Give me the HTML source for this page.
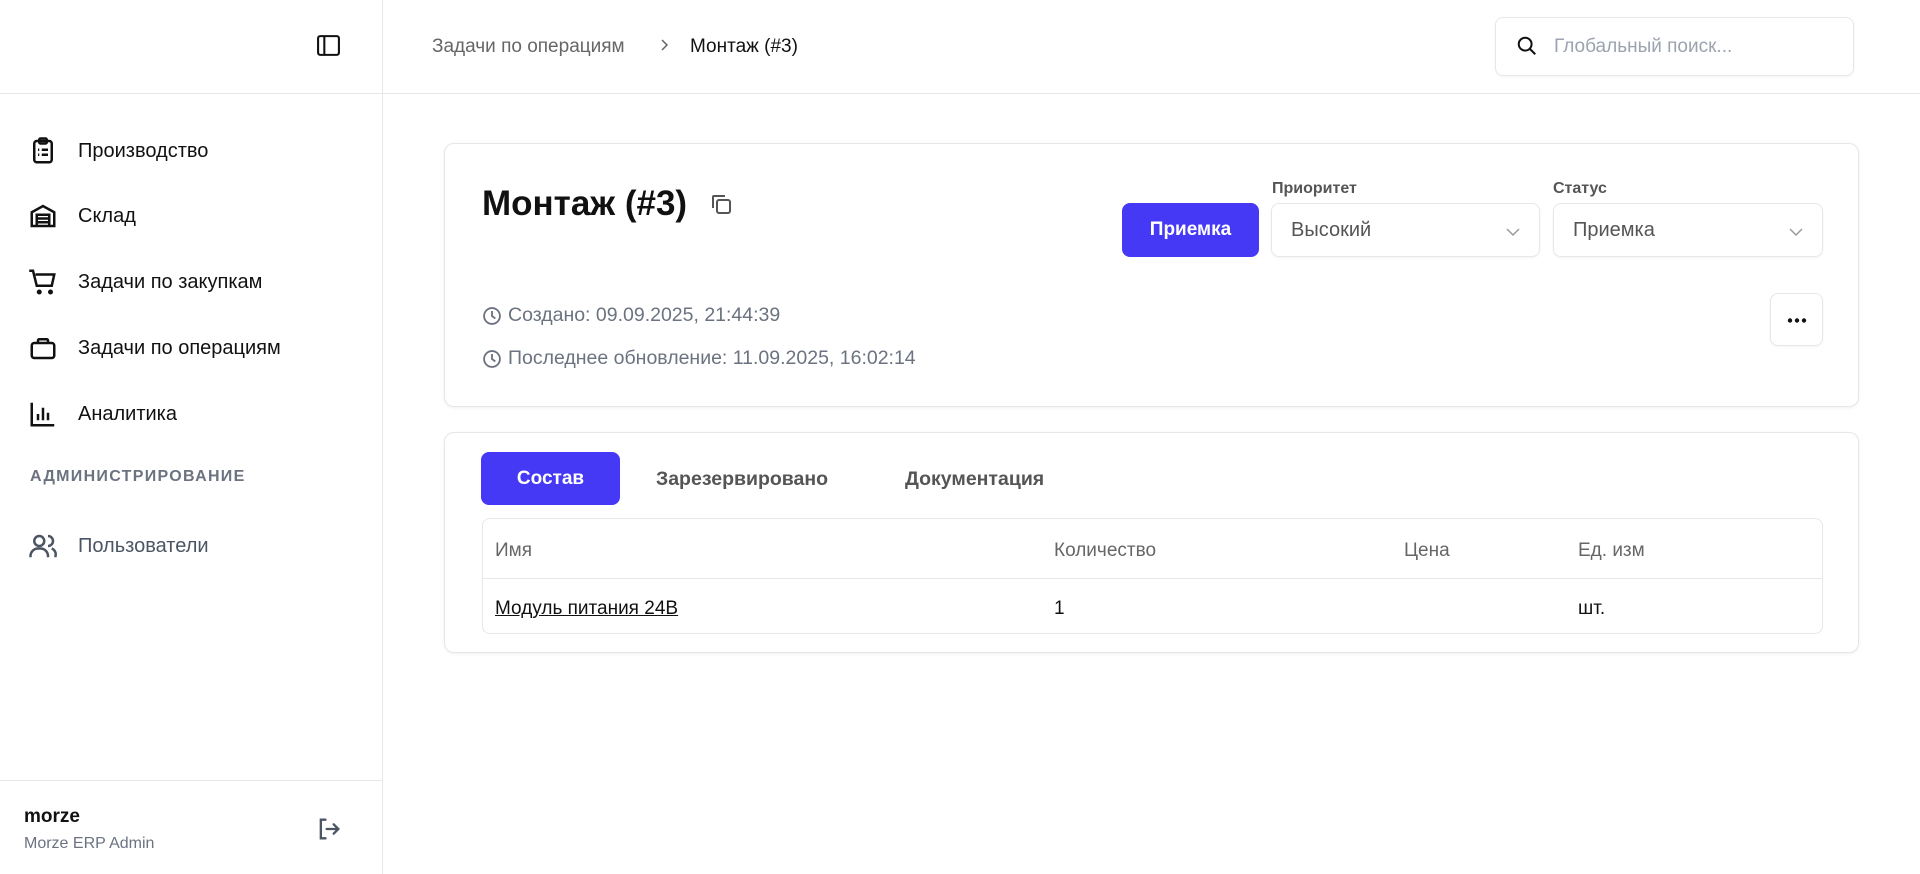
<!DOCTYPE html>
<html><head><meta charset="utf-8"><style>
*{box-sizing:border-box;margin:0;padding:0}
body{width:1920px;height:874px;background:#fff;font-family:"Liberation Sans","Noto Sans CJK SC",sans-serif;color:#111;position:relative;overflow:hidden}
.abs{position:absolute}
.side{left:0;top:0;width:383px;height:874px;border-right:1px solid #e5e7eb}
.hline{height:1px;background:#e5e7eb}
.nav{left:28px;font-size:20px;color:#111;display:flex;align-items:center;height:30px}
.nav svg{width:30px;height:30px;margin-right:20px}
.card{border:1px solid #e5e7eb;border-radius:10px;box-shadow:0 1px 3px rgba(0,0,0,.06);background:#fff}
.sel{border:1px solid #e5e7eb;border-radius:8px;box-shadow:0 1px 2px rgba(0,0,0,.05);font-size:20px;color:#555;padding-left:19px;display:flex;align-items:center}
.sel svg{position:absolute;right:18px;top:20px}
.lbl{font-size:16px;font-weight:bold;color:#555}
.th{font-size:19px;color:#666;top:540px}
.td{font-size:19px;color:#111;top:598px}
.meta{font-size:19.5px;color:#6b7280;display:flex;align-items:center;left:482px}
.meta svg{margin-right:6px}
</style></head><body>
<div class="abs side"></div>
<div class="abs hline" style="left:0;top:93px;width:1920px"></div>
<div class="abs hline" style="left:0;top:780px;width:383px"></div>
<svg class="abs" style="left:316px;top:33px" width="25" height="25" viewBox="0 0 24 24" fill="none" stroke="#111" stroke-width="2"><rect x="2" y="3" width="20" height="18" rx="2"/><line x1="8" y1="3" x2="8" y2="21"/></svg>

<div class="abs nav" style="top:136px"><svg viewBox="0 0 24 24" fill="none" stroke="#111" stroke-width="2"><rect x="5" y="4" width="14" height="17" rx="2"/><rect x="9" y="2" width="6" height="4" rx="1"/><path d="M8 11h1M11 11h5M8 15h1M11 15h5"/></svg>Производство</div>
<div class="abs nav" style="top:201px"><svg viewBox="0 0 24 24" fill="none" stroke="#111" stroke-width="2"><path d="M3 20V9l9-5 9 5v11z"/><path d="M7 20v-9h10v9M7 14h10M7 17h10"/></svg>Склад</div>
<div class="abs nav" style="top:267px"><svg viewBox="0 0 24 24" fill="none" stroke="#111" stroke-width="2"><path d="M1 3h3l3 12h12l2-9H6"/><circle cx="9" cy="20" r="1" fill="#111"/><circle cx="18" cy="20" r="1" fill="#111"/></svg>Задачи по закупкам</div>
<div class="abs nav" style="top:333px"><svg viewBox="0 0 24 24" fill="none" stroke="#111" stroke-width="2"><rect x="3" y="8" width="18" height="12" rx="2"/><path d="M8 8V6a1 1 0 0 1 1-1h6a1 1 0 0 1 1 1v2"/></svg>Задачи по операциям</div>
<div class="abs nav" style="top:399px"><svg viewBox="0 0 24 24" fill="none" stroke="#111" stroke-width="2"><path d="M3 3v18h18M8 17v-5M12 17V7M16 17v-6"/></svg>Аналитика</div>
<div class="abs" style="left:30px;top:468px;font-size:16px;font-weight:bold;color:#6b7280;letter-spacing:1.3px">АДМИНИСТРИРОВАНИЕ</div>
<div class="abs nav" style="top:531px;color:#4b5563"><svg viewBox="0 0 24 24" fill="none" stroke="#4b5563" stroke-width="2"><circle cx="9" cy="8" r="4"/><path d="M2 21v-1a6 6 0 0 1 6-6h2a6 6 0 0 1 6 6v1M16 4a4 4 0 0 1 0 8M19 14a5 5 0 0 1 3 6v1"/></svg>Пользователи</div>

<div class="abs" style="left:24px;top:806px;font-size:19px;font-weight:bold">morze</div>
<div class="abs" style="left:24px;top:835px;font-size:16px;color:#6b7280">Morze ERP Admin</div>
<svg class="abs" style="left:315px;top:815px" width="28" height="28" viewBox="0 0 24 24" fill="none" stroke="#4b5563" stroke-width="2" stroke-linecap="round"><path d="M9 4H5v16h4M10 12h10M16 8l4 4-4 4"/></svg>

<div class="abs" style="left:432px;top:36px;font-size:19px;color:#666">Задачи по операциям</div>
<svg class="abs" style="left:657px;top:38px" width="14" height="14" viewBox="0 0 14 14" fill="none" stroke="#666" stroke-width="1.5"><path d="M5 2l5 5-5 5"/></svg>
<div class="abs" style="left:690px;top:36px;font-size:19px;color:#111">Монтаж (#3)</div>
<div class="abs" style="left:1495px;top:17px;width:359px;height:59px;border:1px solid #e5e7eb;border-radius:8px;box-shadow:0 1px 2px rgba(0,0,0,.05)"></div>
<svg class="abs" style="left:1516px;top:35px" width="22" height="22" viewBox="0 0 24 24" fill="none" stroke="#111" stroke-width="2.2"><circle cx="10" cy="10" r="7"/><path d="M15 15l6 6"/></svg>
<div class="abs" style="left:1554px;top:36px;font-size:19px;color:#9ca3af">Глобальный поиск...</div>

<div class="abs card" style="left:444px;top:143px;width:1415px;height:264px"></div>
<div class="abs" style="left:482px;top:184px;font-size:35px;font-weight:bold">Монтаж (#3)</div>
<svg class="abs" style="left:709px;top:192px" width="24" height="24" viewBox="0 0 24 24" fill="none" stroke="#555" stroke-width="2"><rect x="8" y="8" width="13" height="13" rx="2"/><path d="M4 16V5a1 1 0 0 1 1-1h11"/></svg>
<div class="abs meta" style="top:304px"><svg width="20" height="20" viewBox="0 0 24 24" fill="none" stroke="#6b7280" stroke-width="2.2"><circle cx="12" cy="12" r="9.5"/><path d="M12 6v6l4 3"/></svg>Создано: 09.09.2025, 21:44:39</div>
<div class="abs meta" style="top:347px"><svg width="20" height="20" viewBox="0 0 24 24" fill="none" stroke="#6b7280" stroke-width="2.2"><circle cx="12" cy="12" r="9.5"/><path d="M12 6v6l4 3"/></svg>Последнее обновление: 11.09.2025, 16:02:14</div>

<div class="abs" style="left:1122px;top:203px;width:137px;height:54px;background:#4539f5;border-radius:8px;color:#fff;font-size:19px;font-weight:bold;display:flex;align-items:center;justify-content:center">Приемка</div>
<div class="abs lbl" style="left:1272px;top:180px">Приоритет</div>
<div class="abs sel" style="left:1271px;top:203px;width:269px;height:54px">Высокий<svg width="16" height="16" viewBox="0 0 16 16" fill="none" stroke="#999" stroke-width="1.5"><path d="M2 5l6 6 6-6"/></svg></div>
<div class="abs lbl" style="left:1553px;top:180px">Статус</div>
<div class="abs sel" style="left:1553px;top:203px;width:270px;height:54px">Приемка<svg width="16" height="16" viewBox="0 0 16 16" fill="none" stroke="#999" stroke-width="1.5"><path d="M2 5l6 6 6-6"/></svg></div>
<div class="abs" style="left:1770px;top:293px;width:53px;height:53px;border:1px solid #e5e7eb;border-radius:8px;box-shadow:0 1px 2px rgba(0,0,0,.05)"><svg style="position:absolute;left:16px;top:24px" width="20" height="5" viewBox="0 0 20 5"><circle cx="3" cy="2.5" r="2.2" fill="#111"/><circle cx="10" cy="2.5" r="2.2" fill="#111"/><circle cx="17" cy="2.5" r="2.2" fill="#111"/></svg></div>

<div class="abs card" style="left:444px;top:432px;width:1415px;height:221px"></div>
<div class="abs" style="left:481px;top:452px;width:139px;height:53px;background:#4539f5;border-radius:8px;color:#fff;font-size:19px;font-weight:bold;display:flex;align-items:center;justify-content:center">Состав</div>
<div class="abs" style="left:656px;top:468px;font-size:19.5px;font-weight:bold;color:#555">Зарезервировано</div>
<div class="abs" style="left:905px;top:468px;font-size:19.5px;font-weight:bold;color:#555">Документация</div>
<div class="abs" style="left:482px;top:518px;width:1341px;height:116px;border:1px solid #e5e7eb;border-radius:8px"></div>
<div class="abs hline" style="left:483px;top:578px;width:1339px"></div>
<div class="abs th" style="left:495px">Имя</div>
<div class="abs th" style="left:1054px">Количество</div>
<div class="abs th" style="left:1404px">Цена</div>
<div class="abs th" style="left:1578px">Ед. изм</div>
<div class="abs td" style="left:495px;text-decoration:underline">Модуль питания 24В</div>
<div class="abs td" style="left:1054px">1</div>
<div class="abs td" style="left:1578px">шт.</div>
</body></html>
